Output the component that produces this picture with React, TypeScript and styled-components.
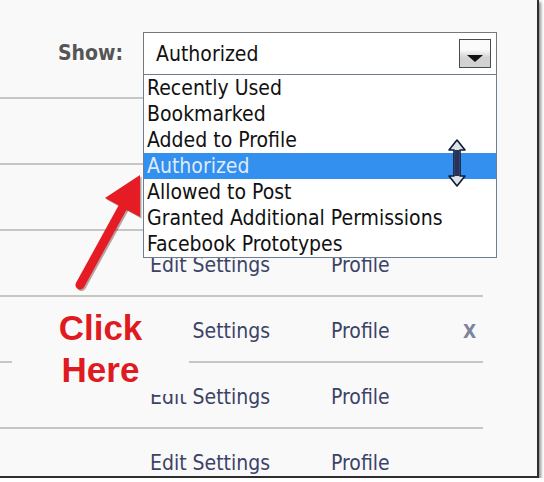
import styled, { createGlobalStyle } from "styled-components";

const GlobalStyle = createGlobalStyle`
  body {
    margin: 0;
    background: #ffffff;
  }
`;

const OPTIONS = [
  "Recently Used",
  "Bookmarked",
  "Added to Profile",
  "Authorized",
  "Allowed to Post",
  "Granted Additional Permissions",
  "Facebook Prototypes",
];

// the first two rows sit fully under the open list, so nothing of them shows
const ROWS = [
  { links: false, remove: false },
  { links: false, remove: false },
  { links: true, remove: false },
  { links: true, remove: true },
  { links: true, remove: false },
  { links: true, remove: false },
];

const App = () => {
  return (
    <>
      <GlobalStyle />
      <Panel>
        <Header>
          <ShowLabel>Show:</ShowLabel>
          <SelectWrap>
            <SelectBox>
              <SelectValue>Authorized</SelectValue>
              <ArrowButton>
                <Triangle />
              </ArrowButton>
            </SelectBox>
            <OptionList>
              {OPTIONS.map((o) => (
                <Option key={o} $active={o === "Authorized"}>
                  {o}
                </Option>
              ))}
            </OptionList>
          </SelectWrap>
        </Header>

        <Rows>
          {ROWS.map((r, i) => (
            <Row key={i}>
              {r.links && (
                <>
                  <RowLink>Edit Settings</RowLink>
                  <RowLink>Profile</RowLink>
                  {r.remove ? <Remove>X</Remove> : <span />}
                </>
              )}
            </Row>
          ))}
        </Rows>

        <Callout>
          Click
          <br />
          Here
        </Callout>

        <Pointer viewBox="0 0 200 300" width="200" height="300">
          <g transform="translate(1.5 1.5)" fill="rgba(60,0,0,0.35)">
            <line x1="80" y1="285" x2="124" y2="205" stroke="rgba(60,0,0,0.35)" strokeWidth="9" strokeLinecap="round" />
            <polygon points="140,175 105,198 140,217" />
          </g>
          <line x1="80" y1="285" x2="124" y2="205" stroke="#e51c23" strokeWidth="9" strokeLinecap="round" />
          <polygon points="140,175 105,198 140,217" fill="#e51c23" />
        </Pointer>

        <ResizeCursor viewBox="0 0 18 48" width="18" height="48">
          <path
            d="M9 1 L17 11 L12 11 L12 37 L17 37 L9 47 L1 37 L6 37 L6 11 L1 11 Z"
            fill="#dde2ea"
            stroke="#101a36"
            strokeWidth="1.6"
            strokeLinejoin="round"
          />
          <rect x="7" y="11" width="4" height="26" fill="#27335a" />
        </ResizeCursor>
      </Panel>
    </>
  );
};

export default App;

const Panel = styled.div`
  position: relative;
  width: 537px;
  height: 476px;
  overflow: hidden;
  background: #f9f9f9;
  border-right: 2px solid #2e2e2e;
  border-bottom: 2px solid #2e2e2e;
  box-shadow: 2px 2px 3px rgba(0, 0, 0, 0.45);
  font-family: "DejaVu Sans Condensed", "DejaVu Sans", sans-serif;
`;

const Header = styled.div`
  height: 97px;
  box-sizing: border-box;
  padding: 32px 0 0 58px;
  display: flex;
  align-items: flex-start;
  gap: 20px;
`;

const ShowLabel = styled.span`
  margin-top: 9px;
  font-size: 21px;
  font-weight: 700;
  color: #555555;
  text-shadow: 0 1px 0 #ffffff;
`;

const SelectWrap = styled.div`
  position: relative;
  z-index: 2;
`;

const SelectBox = styled.div`
  width: 354px;
  height: 43px;
  box-sizing: border-box;
  border: 1.5px solid #777777;
  background: #ffffff;
  display: flex;
  align-items: center;
  justify-content: space-between;
  padding: 0 5px 0 12px;
`;

const SelectValue = styled.span`
  font-size: 21px;
  color: #111111;
`;

const ArrowButton = styled.div`
  width: 32px;
  height: 29px;
  box-sizing: border-box;
  border: 1.5px solid #4a4a4a;
  background: linear-gradient(#fbfbfb 35%, #d2d2d2 65%);
  display: flex;
  justify-content: center;
  align-items: flex-end;
  padding-bottom: 5px;
`;

const Triangle = styled.div`
  width: 0;
  height: 0;
  border-left: 8px solid transparent;
  border-right: 8px solid transparent;
  border-top: 7px solid #111111;
`;

const OptionList = styled.div`
  position: absolute;
  top: calc(100% - 1px);
  left: 0;
  width: 354px;
  box-sizing: border-box;
  border: 1px solid #6f7e8e;
  background: #ffffff;
`;

const Option = styled.div<{ $active: boolean }>`
  height: 26px;
  line-height: 26px;
  padding-left: 3px;
  font-size: 21px;
  white-space: nowrap;
  color: ${(p) => (p.$active ? "#dfeafa" : "#111111")};
  background: ${(p) => (p.$active ? "#3390ef" : "transparent")};
`;

const Rows = styled.div`
  width: 483px;
`;

const Row = styled.div`
  height: 66px;
  box-sizing: border-box;
  border-top: 2px solid #c6c6c6;
  display: grid;
  grid-template-columns: 181px 132px 1fr;
  align-items: center;
  padding: 3px 0 0 150px;
`;

const RowLink = styled.span`
  font-size: 21px;
  color: #3b4368;
  white-space: nowrap;
`;

const Remove = styled.span`
  font-size: 19px;
  font-weight: 700;
  color: #7d849c;
`;

const Callout = styled.div`
  position: absolute;
  left: 12px;
  top: 300px;
  width: 177px;
  height: 94px;
  box-sizing: border-box;
  padding-top: 7px;
  background: #f9f9f9;
  text-align: center;
  font-family: "Liberation Sans", Arial, sans-serif;
  font-weight: 700;
  font-size: 35px;
  line-height: 42px;
  color: #df1b22;
  z-index: 3;
`;

const Pointer = styled.svg`
  position: absolute;
  left: 0;
  top: 0;
  z-index: 4;
  pointer-events: none;
`;

const ResizeCursor = styled.svg`
  position: absolute;
  left: 448px;
  top: 139px;
  z-index: 5;
  pointer-events: none;
`;
